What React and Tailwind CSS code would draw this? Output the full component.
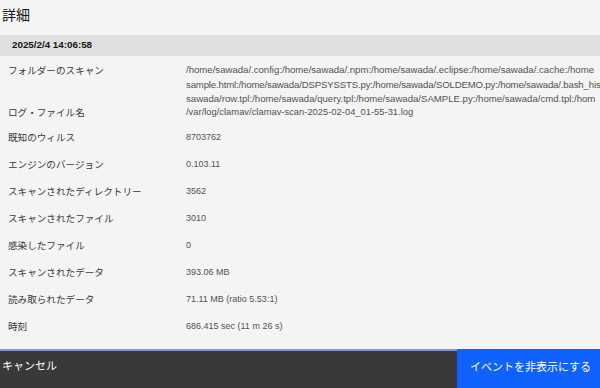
const rows = [
    { label: "既知のウィルス", value: "8703762" },
    { label: "エンジンのバージョン", value: "0.103.11" },
    { label: "スキャンされたディレクトリー", value: "3562" },
    { label: "スキャンされたファイル", value: "3010" },
    { label: "感染したファイル", value: "0" },
    { label: "スキャンされたデータ", value: "393.06 MB" },
    { label: "読み取られたデータ", value: "71.11 MB (ratio 5.53:1)" },
    { label: "時刻", value: "686.415 sec (11 m 26 s)" }
];

const folderLines = [
    { text: "/home/sawada/.config:/home/sawada/.npm:/home/sawada/.eclipse:/home/sawada/.cache:/home", cls: "" },
    { text: "sample.html:/home/sawada/DSPSYSSTS.py:/home/sawada/SOLDEMO.py:/home/sawada/.bash_his", cls: "tracking-[-0.15px]" },
    { text: "sawada/row.tpl:/home/sawada/query.tpl:/home/sawada/SAMPLE.py:/home/sawada/cmd.tpl:/hom", cls: "" }
];

const jp = { fontFamily: '"Noto Sans CJK JP", "Liberation Sans", sans-serif' };
const latin = { fontFamily: '"Liberation Sans", "Noto Sans CJK JP", sans-serif' };

export default function App() {
    return (
        <div className="w-[600px] h-[388px] flex flex-col bg-[#f4f4f4] overflow-hidden" style={jp}>

            {/* TITLE */}
            <div className="h-[35px] shrink-0 pl-[2px] pt-[4px] text-[14px] leading-[20px] text-[#161616]">詳細</div>

            {/* DATE BAR */}
            <div className="h-[21px] shrink-0 bg-[#e0e0e0] pl-[12px] flex items-center text-[9.8px] font-bold text-[#161616]" style={latin}>
                2025/2/4 14:06:58
            </div>

            {/* FOLDER */}
            <div className="flex h-[48px] shrink-0 pt-[7px]">
                <div className="w-[186px] shrink-0 pl-[8px] text-[9.6px] leading-[14.5px] text-[#393939]">フォルダーのスキャン</div>
                <div className="flex-1 min-w-0 text-[9.6px] leading-[14.5px] text-[#525252]" style={latin}>
                    {folderLines.map(l => (
                        <div key={l.text} className={`whitespace-nowrap ${l.cls}`}>{l.text}</div>
                    ))}
                </div>
            </div>

            {/* LOG */}
            <div className="flex h-[20px] shrink-0 pt-[1px]">
                <div className="w-[186px] shrink-0 pl-[8px] text-[9.6px] leading-[14px] text-[#393939]">ログ・ファイル名</div>
                <div className="flex-1 text-[9.4px] leading-[14px] text-[#525252] whitespace-nowrap" style={latin}>
                    /var/log/clamav/clamav-scan-2025-02-04_01-55-31.log
                </div>
            </div>

            {rows.map(r => (
                <div key={r.label} className="flex items-center h-[27px] shrink-0">
                    <div className="w-[186px] shrink-0 pl-[8px] text-[9.6px] text-[#393939]">{r.label}</div>
                    <div className="flex-1 text-[9px] text-[#525252]" style={latin}>{r.value}</div>
                </div>
            ))}

            <div className="flex-1" />

            {/* FOOTER */}
            <div className="h-[39px] flex shrink-0">
                <div className="flex-1 bg-[#393939] border-t-2 border-[#7f97cc] pl-[2px] pt-[6px] text-[11px] leading-[16px] text-white">
                    キャンセル
                </div>
                <div className="w-[143px] bg-[#0f62fe] pl-[13px] pt-[9px] text-[11px] leading-[16px] text-white">
                    イベントを非表示にする
                </div>
            </div>
        </div>
    );
}
